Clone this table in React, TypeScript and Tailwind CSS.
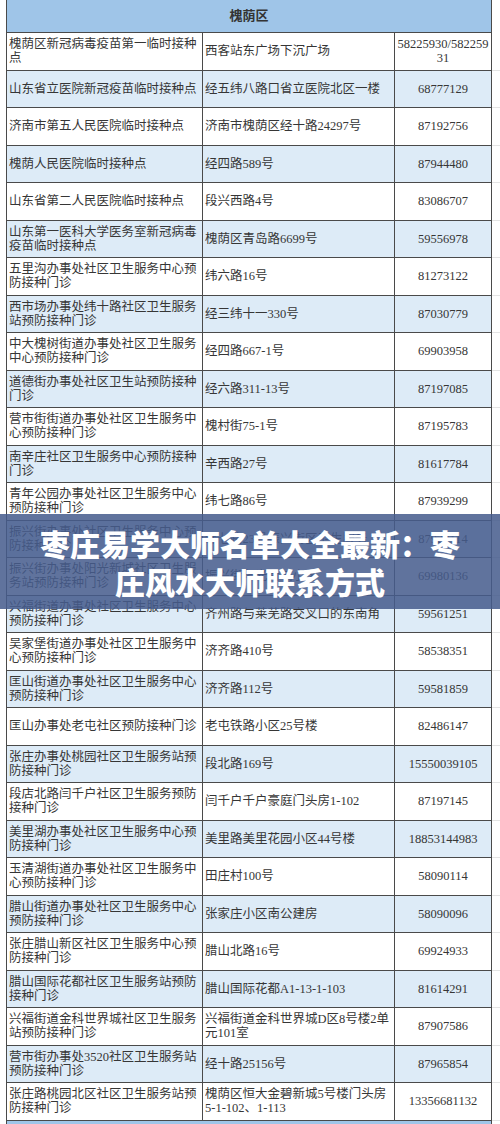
import React from "react";

type Row = [string, string, string];

const rows: Row[] = [
  ["槐荫区新冠病毒疫苗第一临时接种点", "西客站东广场下沉广场", "58225930/58225931"],
  ["山东省立医院新冠疫苗临时接种点", "经五纬八路口省立医院北区一楼", "68777129"],
  ["济南市第五人民医院临时接种点", "济南市槐荫区经十路24297号", "87192756"],
  ["槐荫人民医院临时接种点", "经四路589号", "87944480"],
  ["山东省第二人民医院临时接种点", "段兴西路4号", "83086707"],
  ["山东第一医科大学医务室新冠病毒疫苗临时接种点", "槐荫区青岛路6699号", "59556978"],
  ["五里沟办事处社区卫生服务中心预防接种门诊", "纬六路16号", "81273122"],
  ["西市场办事处纬十路社区卫生服务站预防接种门诊", "经三纬十一330号", "87030779"],
  ["中大槐树街道办事处社区卫生服务中心预防接种门诊", "经四路667-1号", "69903958"],
  ["道德街办事处社区卫生站预防接种门诊", "经六路311-13号", "87197085"],
  ["营市街街道办事处社区卫生服务中心预防接种门诊", "槐村街75-1号", "87195783"],
  ["南辛庄社区卫生服务中心预防接种门诊", "辛西路27号", "81617784"],
  ["青年公园办事处社区卫生服务中心预防接种门诊", "纬七路86号", "87939299"],
  ["振兴街办事处社区卫生服务中心预防接种门诊", "纬七路23号振兴街区卫生服务", "87922114"],
  ["振兴街办事处阳光新城社区卫生服务站预防接种门诊", "振兴街阳光新城小区", "69980136"],
  ["兴福街道办事处社区卫生服务中心预防接种门诊", "齐州路与莱芜路交叉口的东南角", "59561251"],
  ["吴家堡街道办事处社区卫生服务中心预防接种门诊", "济齐路410号", "58538351"],
  ["匡山街道办事处社区卫生服务中心预防接种门诊", "济齐路112号", "59581859"],
  ["匡山办事处老屯社区预防接种门诊", "老屯铁路小区25号楼", "82486147"],
  ["张庄办事处桃园社区卫生服务站预防接种门诊", "段北路169号", "15550039105"],
  ["段店北路闫千户社区卫生服务预防接种门诊", "闫千户千户豪庭门头房1-102", "87197145"],
  ["美里湖办事处社区卫生服务中心预防接种门诊", "美里路美里花园小区44号楼", "18853144983"],
  ["玉清湖街道办事处社区卫生服务中心预防接种门诊", "田庄村100号", "58090114"],
  ["腊山街道办事处社区卫生服务中心预防接种门诊", "张家庄小区南公建房", "58090096"],
  ["张庄腊山新区社区卫生服务中心预防接种门诊", "腊山北路16号", "69924933"],
  ["腊山国际花都社区卫生服务站预防接种门诊", "腊山国际花都A1-13-1-103", "81614291"],
  ["兴福街道金科世界城社区卫生服务站预防接种门诊", "兴福街道金科世界城D区8号楼2单元101室", "87907586"],
  ["营市街办事处3520社区卫生服务站预防接种门诊", "经十路25156号", "87965854"],
  ["张庄路桃园北区社区卫生服务站预防接种门诊", "槐荫区恒大金碧新城5号楼门头房5-1-102、1-113", "13356681132"],
];

const font = { fontFamily: '"Liberation Serif", "Noto Sans CJK SC", serif' };

export default function App() {
  return (
    <div className="relative w-[500px] h-[1124px] overflow-hidden bg-white text-[#363636]" style={font}>
      {/* header */}
      <div className="flex">
        <div className="w-[6px] shrink-0" />
        <div className="w-[486px] h-[33px] flex items-center justify-center bg-[#9fc5e8] border-x border-b border-[#4a4a4a] text-[13px] font-bold text-[#333]">
          槐荫区
        </div>
      </div>

      {rows.map((r, i) => (
        <div key={i} className="flex h-[37.5px]">
          <div className="w-[6px] shrink-0" />
          <div
            className={
              "w-[486px] shrink-0 grid grid-cols-[196px_192px_1fr] border-x border-b border-[#4a4a4a] " +
              (i % 2 === 1 ? "bg-[#ddebf7]" : "bg-white")
            }
          >
            <div className="flex items-center pl-[2px] pr-[1px] border-r border-[#4a4a4a] text-[12.5px] leading-[14px] break-all">
              {r[0]}
            </div>
            <div className="flex items-center pl-[2px] pr-[4px] border-r border-[#4a4a4a] text-[12.5px] leading-[14px] break-all">
              {r[1]}
            </div>
            <div className="flex items-center justify-center text-center px-[2px] text-[12.5px] leading-[14px] break-all">
              {r[2]}
            </div>
          </div>
          <div className="flex-1 border-b border-[#e4e4e4]" />
        </div>
      ))}

      <div className="flex">
        <div className="w-[6px] shrink-0" />
        <div className="w-[486px] h-[20px] bg-[#9fc5e8] border-x border-[#4a4a4a]" />
      </div>

      {/* title overlay */}
      <div
        className="absolute left-0 top-[514px] w-[500px] h-[95px] flex flex-col items-center justify-center bg-[rgba(70,92,141,0.86)] text-white text-[30px] leading-[38px] font-black"
        style={{ fontFamily: '"Noto Sans CJK SC", sans-serif' }}
      >
        <div>枣庄易学大师名单大全最新：枣</div>
        <div>庄风水大师联系方式</div>
      </div>
    </div>
  );
}
